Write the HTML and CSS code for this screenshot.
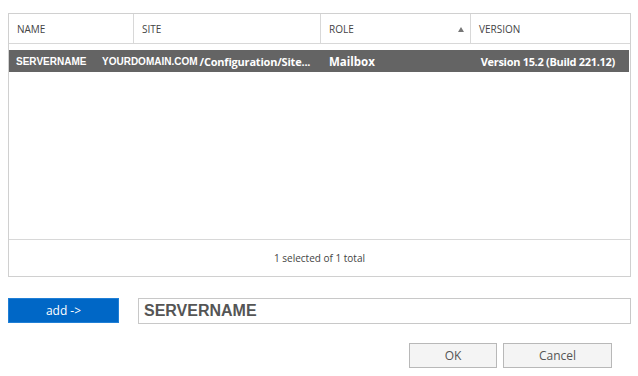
FILE: index.html
```html
<!DOCTYPE html>
<html>
<head>
<meta charset="utf-8">
<link rel="stylesheet" href="styles.css">
</head>
<body>
<div class="wrap">
  <div class="grid">
    <div class="head">
      <div class="hc c1">NAME</div>
      <div class="hc c2">SITE</div>
      <div class="hc c3">ROLE<span class="sort"></span></div>
      <div class="hc c4">VERSION</div>
    </div>
    <div class="body">
      <div class="row sel">
        <div class="rc c1 arial">SERVERNAME</div>
        <div class="rc c2"><span class="arial">YOURDOMAIN.COM</span> /Configuration/Site...</div>
        <div class="rc c3">Mailbox</div>
        <div class="rc c4 right">Version 15.2 (Build 221.12)</div>
      </div>
    </div>
    <div class="foot">1 selected of 1 total</div>
  </div>
  <div class="addrow">
    <button class="add">add -&gt;</button>
    <div class="field">SERVERNAME</div>
  </div>
  <div class="actions">
    <button class="btn ok">OK</button>
    <button class="btn cancel">Cancel</button>
  </div>
</div>
</body>
</html>
```
FILE: styles.css
```css
html, body { margin: 0; padding: 0; background: #fff; }
body { font-family: "Open Sans", "Noto Sans", sans-serif; color: #333; }
.wrap { padding: 13px 7px 0 8px; width: 623px; }
.grid { border: 1px solid #d0d0d0; display: flex; flex-direction: column; height: 264px; box-sizing: border-box; }
.head { display: flex; height: 30px; border-bottom: 1px solid #d8d8d8; box-sizing: border-box; }
.hc { font-size: 10px; color: #444; display: flex; align-items: center; padding-left: 8px; box-sizing: border-box; border-right: 1px solid #d8d8d8; position: relative; }
.hc.c4 { border-right: none; }
.c1 { width: 125px; }
.c2 { width: 187px; }
.c3 { width: 150px; }
.c4 { flex: 1; }
.sort { position: absolute; right: 6px; top: 13px; width: 0; height: 0; border-left: 3.5px solid transparent; border-right: 3.5px solid transparent; border-bottom: 5px solid #777; }
.body { flex: 1; padding-top: 6px; }
.row { display: flex; height: 22px; }
.row.sel { background: #646464; color: #fff; margin-right: 1px; }
.rc { display: flex; align-items: center; padding-left: 7px; box-sizing: border-box; font-weight: 700; font-size: 11.5px; white-space: nowrap; }
.rc.c2 { padding-left: 0; margin-left: -32px; width: 219px; font-size: 11px; letter-spacing: -0.2px; }
.rc.c3 { padding-left: 8px; }
.rc .arial, .rc.arial { font-family: "Liberation Sans", Arial, sans-serif; font-size: 10px; letter-spacing: 0; }
.rc .arial { margin-right: 2px; }
.rc.right { justify-content: flex-end; padding-right: 14px; font-size: 11px; letter-spacing: -0.3px; }
.foot { height: 37px; border-top: 1px solid #d8d8d8; box-sizing: border-box; display: flex; align-items: center; justify-content: center; font-size: 10px; color: #444; }
.addrow { display: flex; margin-top: 21px; gap: 19px; height: 26px; }
.add { width: 111px; height: 25px; background: #0067c6; border: 1px solid #1f7fd6; color: #fff; font-family: "Open Sans", sans-serif; font-size: 12px; padding: 0; }
.field { flex: 1; border: 1px solid #c8c8c8; box-sizing: border-box; height: 26px; display: flex; align-items: center; padding-left: 5px; font-family: "Liberation Sans", Arial, sans-serif; font-weight: 700; font-size: 16px; color: #555; }
.actions { display: flex; justify-content: flex-end; gap: 6px; margin-top: 19px; padding-right: 19px; }
.btn { height: 25px; background: #f4f4f4; border: 1px solid #b8b8b8; font-family: "Open Sans", sans-serif; font-size: 12px; color: #555; padding: 0; }
.ok { width: 88px; }
.cancel { width: 109px; }
```
